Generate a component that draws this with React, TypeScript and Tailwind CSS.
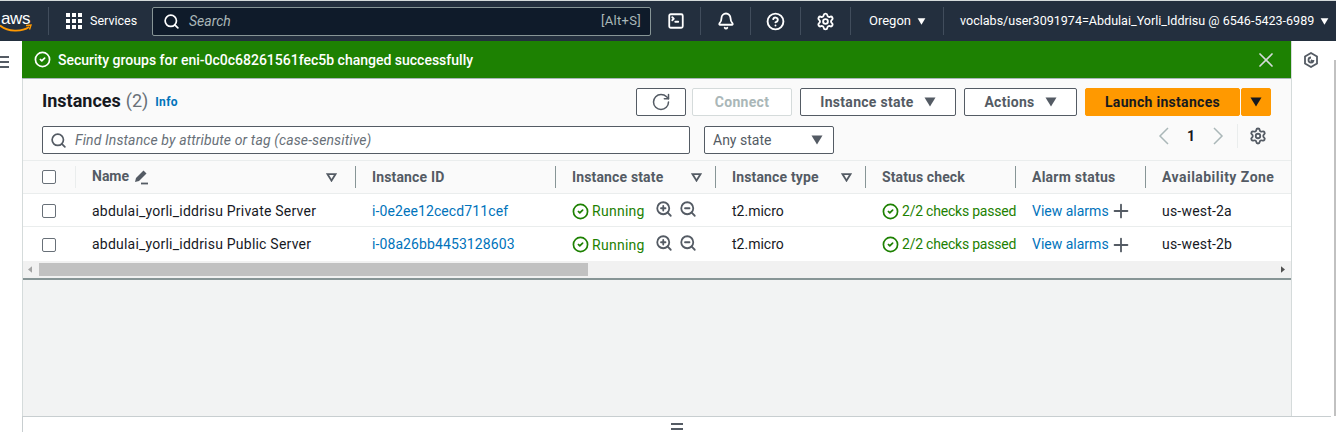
import React from 'react'
import {
  Bell,
  CircleCheck,
  CircleHelp,
  Plus,
  RotateCw,
  Search,
  Settings,
  SquareTerminal,
  X,
  ZoomIn,
  ZoomOut
} from 'lucide-react'

const Caret = ({ className }: { className: string }) => (
  <svg viewBox="0 0 12 10" className={className}>
    <path d="M0.5 0.5h11L6 9.5z" fill="currentColor" />
  </svg>
)

const SortCaret = () => (
  <svg viewBox="0 0 12 10" className="w-[11px] h-[9px] text-[#545b64]">
    <path d="M1.5 1.2h9L6 8.500z" fill="none" stroke="currentColor" strokeWidth="2" />
  </svg>
)

const NavDivider = () => <div className="w-px h-[28px] shrink-0 bg-[#414d5c]" />

const NavIcon = ({ children }: { children: React.ReactNode }) => (
  <div className="w-[49px] shrink-0 flex justify-center text-white">{children}</div>
)

const columns = 'grid grid-cols-[53px_280px_200px_160px_150px_150px_130px_1fr]'

const headers = [
  { label: 'Instance ID', sort: false, track: 'tracking-[0.15px]' },
  { label: 'Instance state', sort: true, track: 'tracking-[0.15px]' },
  { label: 'Instance type', sort: true, track: 'tracking-[0.15px]' },
  { label: 'Status check', sort: false, track: 'tracking-[0.1px]' },
  { label: 'Alarm status', sort: false, track: 'tracking-[0.25px]' },
  { label: 'Availability Zone', sort: false, track: 'tracking-[0.47px]' }
]

const rows = [
  {
    name: 'abdulai_yorli_iddrisu Private Server',
    id: 'i-0e2ee12cecd711cef',
    zone: 'us-west-2a',
    height: 'h-[33px] pt-[2px] border-b border-[#eaeded]'
  },
  {
    name: 'abdulai_yorli_iddrisu Public Server',
    id: 'i-08a26bb4453128603',
    zone: 'us-west-2b',
    height: 'h-[34px] pt-[1px]'
  }
]

const Checkbox = () => (
  <div className="w-[14px] h-[14px] rounded-[2px] border border-[#687078] bg-white" />
)

const Button = ({ className, children }: { className: string; children: React.ReactNode }) => (
  <div
    className={`h-[28px] flex items-center justify-center rounded-[2px] border font-bold text-[14px] tracking-[0.3px] ${className}`}
  >
    {children}
  </div>
)

export default function App() {
  return (
    <div className="w-[1336px] h-[432px] overflow-hidden flex flex-col bg-white font-['Roboto',sans-serif] text-[#16191f]">
      {/* top nav */}
      <div className="h-[41px] shrink-0 bg-[#232f3e] border-t border-[#d5dbdb] flex items-center text-white overflow-hidden">
        <div className="w-[48px] shrink-0 flex flex-col mt-[1px]">
          <span className="text-[17px] leading-[15px] -mb-[2px] tracking-[-0.4px] font-['Liberation_Sans',sans-serif] ml-[1px]">
            aws
          </span>
          <svg viewBox="0 0 32 9" className="w-[32px] h-[9px]">
            <path d="M0 1.500C8 8 22 8 29 3" fill="none" stroke="#ff9900" strokeWidth="1.8" />
            <path d="M26 1.500l5-.5-1.500 4.500" fill="none" stroke="#ff9900" strokeWidth="1.400" />
          </svg>
        </div>
        <NavDivider />
        <div className="ml-[17px] w-[16px] shrink-0 grid grid-cols-3 gap-[2px]">
          {Array.from({ length: 9 }).map((_, i) => (
            <div key={i} className="w-[4px] h-[4px] bg-white" />
          ))}
        </div>
        <span className="ml-[8px] text-[12.5px] w-[62px] shrink-0">Services</span>
        <div className="w-[499px] h-[29px] shrink-0 flex items-center rounded-[2px] border border-[#879596] bg-[#0f1b2a] pl-[10px] pr-[9px]">
          <Search className="w-[17px] h-[17px] text-white" strokeWidth={2.4} />
          <span className="ml-[9px] text-[14px] italic text-[#aab7b8]">Search</span>
          <span className="ml-auto text-[13px] tracking-[0.3px] text-[#aab7b8]">[Alt+S]</span>
        </div>
        <NavIcon>
          <SquareTerminal className="w-[18px] h-[18px]" strokeWidth={2.4} />
        </NavIcon>
        <NavDivider />
        <NavIcon>
          <Bell className="w-[18px] h-[18px]" strokeWidth={2.4} />
        </NavIcon>
        <NavDivider />
        <NavIcon>
          <CircleHelp className="w-[19px] h-[19px]" strokeWidth={2.4} />
        </NavIcon>
        <NavDivider />
        <NavIcon>
          <Settings className="w-[19px] h-[19px]" strokeWidth={2.4} />
        </NavIcon>
        <NavDivider />
        <span className="ml-[18px] text-[13px] shrink-0">Oregon</span>
        <Caret className="ml-[6px] w-[9px] h-[7px] shrink-0 text-white" />
        <div className="ml-[17px] shrink-0">
          <NavDivider />
        </div>
        <span className="ml-[16px] text-[12.55px] whitespace-nowrap shrink-0">
          voclabs/user3091974=Abdulai_Yorli_Iddrisu @ 6546-5423-6989
        </span>
        <Caret className="ml-[6px] w-[9px] h-[7px] shrink-0 text-white" />
      </div>

      <div className="flex-1 flex min-h-0">
        {/* left rail */}
        <div className="w-[22px] shrink-0 pt-[15px]">
          <div className="w-[9px] flex flex-col gap-[3px]">
            <div className="h-[2px] bg-[#545b64]" />
            <div className="h-[2px] bg-[#545b64]" />
            <div className="h-[2px] bg-[#545b64]" />
          </div>
        </div>

        <div className="flex-1 flex flex-col min-w-0">
          <div className="h-[375px] flex">
            <div className="w-[1270px] shrink-0 flex flex-col bg-[#f2f3f3] border-r border-[#d5dbdb]">
              {/* flash */}
              <div className="h-[38px] shrink-0 bg-[#1d8102] border-b border-[#aab7b8] flex items-center pl-[12px] pr-[17px] text-white">
                <CircleCheck className="w-[17px] h-[17px]" strokeWidth={2.4} />
                <span className="ml-[7px] mt-[1px] text-[14px] font-medium">
                  Security groups for eni-0c0c68261561fec5b changed successfully
                </span>
                <X className="ml-auto w-[24px] h-[24px] -mr-[4px] text-[#d5dbdb]" strokeWidth={1.700} />
              </div>

              <div className="flex-1 flex flex-col border-l border-[#d5dbdb]">
                {/* toolbar */}
                <div className="h-[81px] shrink-0 bg-[#fafafa] pl-[19px] pr-[20px] pt-[9px]">
                  <div className="flex items-center">
                    <span className="text-[18px] leading-[28px] font-bold -mt-[2px]">Instances</span>
                    <span className="ml-[5px] text-[18px] leading-[28px] text-[#687078] -mt-[2px]">(2)</span>
                    <span className="ml-[7px] text-[12px] font-bold tracking-[0.3px] text-[#0073bb]">Info</span>
                    <Button className="ml-auto w-[50px] border-[#545b64] bg-white text-[#545b64]">
                      <RotateCw className="w-[20px] h-[20px]" strokeWidth={1.800} />
                    </Button>
                    <Button className="ml-[6px] w-[100px] border-[#d5dbdb] bg-white text-[#aab7b8]">
                      Connect
                    </Button>
                    <Button className="ml-[8px] w-[156px] border-[#545b64] bg-white text-[#545b64] gap-[10px]">
                      Instance state
                      <Caret className="w-[12px] h-[10px]" />
                    </Button>
                    <Button className="ml-[8px] w-[113px] border-[#545b64] bg-white text-[#545b64] gap-[10px]">
                      Actions
                      <Caret className="w-[12px] h-[10px]" />
                    </Button>
                    <Button className="ml-[8px] w-[155px] border-[#ff9900] bg-[#ff9900] text-[#16191f]">
                      Launch instances
                    </Button>
                    <Button className="ml-px w-[30px] border-[#ff9900] bg-[#ff9900] text-[#16191f]">
                      <Caret className="w-[12px] h-[10px]" />
                    </Button>
                  </div>
                  <div className="mt-[10px] flex items-start">
                    <div className="w-[648px] h-[28px] flex items-center rounded-[2px] border border-[#545b64] bg-white pl-[7px]">
                      <Search className="w-[17px] h-[17px] text-[#545b64]" strokeWidth={2.4} />
                      <span className="ml-[8px] text-[14px] italic tracking-[0.12px] text-[#687078]">
                        Find Instance by attribute or tag (case-sensitive)
                      </span>
                    </div>
                    <div className="ml-[14px] w-[130px] h-[28px] flex items-center justify-between rounded-[2px] border border-[#545b64] bg-white pl-[8px] pr-[10px]">
                      <span className="text-[14px] text-[#545b64]">Any state</span>
                      <Caret className="w-[12px] h-[10px] text-[#545b64]" />
                    </div>
                    <div className="ml-auto flex items-center h-[22px] -mt-[1px]">
                      <svg viewBox="0 0 11 18" className="w-[11px] h-[18px] text-[#aab7b8]">
                        <path d="M10 1L2 9l8 8" fill="none" stroke="currentColor" strokeWidth="1.500" />
                      </svg>
                      <span className="ml-[18px] text-[14px] font-bold text-[#16191f]">1</span>
                      <svg viewBox="0 0 11 18" className="ml-[18px] w-[11px] h-[18px] text-[#aab7b8]">
                        <path d="M1 1l8 8-8 8" fill="none" stroke="currentColor" strokeWidth="1.500" />
                      </svg>
                      <div className="ml-[13px] w-px h-[24px] bg-[#eaeded]" />
                      <Settings className="ml-[11px] w-[18px] h-[18px] text-[#545b64]" strokeWidth={2.400} />
                      <div className="w-[4px]" />
                    </div>
                  </div>
                </div>

                {/* table */}
                <div className="shrink-0 bg-white overflow-hidden">
                  <div className={`${columns} h-[34px] bg-[#fafafa] border-t border-b border-[#eaeded] text-[14px] font-bold text-[#545b64]`}>
                    <div className="flex items-center pl-[19px]">
                      <Checkbox />
                    </div>
                    <div className="flex items-center -ml-px pl-[16px] border-l border-[#eaeded] my-[5px]">
                      <span className="-mt-[2px]">Name</span>
                      <svg viewBox="0 0 16 16" className="ml-[4px] w-[16px] h-[16px]">
                        <path d="M10.500 1.500l3 3L6 12l-4 1 1-4z" fill="currentColor" />
                        <path d="M8 14.500h7" stroke="currentColor" strokeWidth="1.800" />
                      </svg>
                      <div className="ml-auto mr-[19px]">
                        <SortCaret />
                      </div>
                    </div>
                    {headers.map((h) => (
                      <div key={h.label} className={`flex items-center -ml-px pl-[16px] my-[5px] border-l border-[#879596] whitespace-nowrap ${h.track}`}>
                        {h.label}
                        {h.sort && (
                          <div className="ml-auto mr-[14px]">
                            <SortCaret />
                          </div>
                        )}
                      </div>
                    ))}
                  </div>
                  {rows.map((r) => (
                    <div key={r.id} className={`${columns} ${r.height} text-[14px] items-center`}>
                      <div className="pl-[19px]">
                        <Checkbox />
                      </div>
                      <div className="pl-[16px] whitespace-nowrap tracking-[0.22px]">{r.name}</div>
                      <div className="pl-[16px] tracking-[0.1px] text-[#0073bb]">{r.id}</div>
                      <div className="pl-[16px] flex items-center text-[#1d8102]">
                        <CircleCheck className="w-[17px] h-[17px]" strokeWidth={2.400} />
                        <span className="ml-[3px] mt-[1px] tracking-[0.28px]">Running</span>
                        <ZoomIn className="ml-[10px] w-[18px] h-[18px] text-[#545b64] -mt-[4px]" strokeWidth={2.400} />
                        <ZoomOut className="ml-[6px] w-[18px] h-[18px] text-[#545b64] -mt-[4px]" strokeWidth={2.400} />
                      </div>
                      <div className="pl-[16px]">t2.micro</div>
                      <div className="pl-[16px] flex items-center text-[#1d8102] whitespace-nowrap">
                        <CircleCheck className="shrink-0 w-[17px] h-[17px]" strokeWidth={2.400} />
                        <span className="ml-[3px] tracking-[-0.22px]">2/2 checks passed</span>
                      </div>
                      <div className="pl-[16px] flex items-center text-[#0073bb] whitespace-nowrap">
                        View alarms
                        <Plus className="ml-[1px] w-[22px] h-[22px] text-[#545b64]" strokeWidth={2} />
                      </div>
                      <div className="pl-[16px] tracking-[0.2px]">{r.zone}</div>
                    </div>
                  ))}
                  {/* horizontal scrollbar */}
                  <div className="h-[19px] bg-[#f1f1f1] border-b-2 border-[#879596] flex items-center relative pl-[16px] pr-[6px]">
                    <svg viewBox="0 0 5 8" className="absolute left-[5px] w-[4px] h-[7px] text-[#a3a3a3]">
                      <path d="M5 0v8L0 4z" fill="currentColor" />
                    </svg>
                    <div className="w-[549px] h-[13px] bg-[#c1c1c1]" />
                    <svg viewBox="0 0 5 8" className="ml-auto w-[4px] h-[7px] text-[#505050]">
                      <path d="M0 0v8l5-4z" fill="currentColor" />
                    </svg>
                  </div>
                </div>
                <div className="flex-1 bg-[#f2f3f3]" />
              </div>
            </div>

            {/* right rail */}
            <div className="flex-1 flex justify-between">
              <svg viewBox="0 0 16 16" className="mt-[11px] ml-[11px] w-[16px] h-[16px] text-[#545b64]">
                <path d="M8 1l6 3.500v7L8 15l-6-3.500v-7z" fill="none" stroke="currentColor" strokeWidth="1.800" />
                <path d="M10.500 8a2.500 2.500 0 1 1-2.500-2.500M8 8l2.500 2.500" fill="none" stroke="currentColor" strokeWidth="1.800" />
              </svg>
              <div className="w-[2px] mt-[19px] bg-[#c1c1c1]" />
            </div>
          </div>

          {/* split panel */}
          <div className="flex-1 mr-[5px] bg-white border-t border-l border-[#c8ced0] pt-[6px] flex flex-col items-center gap-[3px]">
            <div className="w-[12px] h-[2px] bg-[#545b64]" />
            <div className="w-[12px] h-[2px] bg-[#545b64]" />
          </div>
        </div>
      </div>
    </div>
  )
}
